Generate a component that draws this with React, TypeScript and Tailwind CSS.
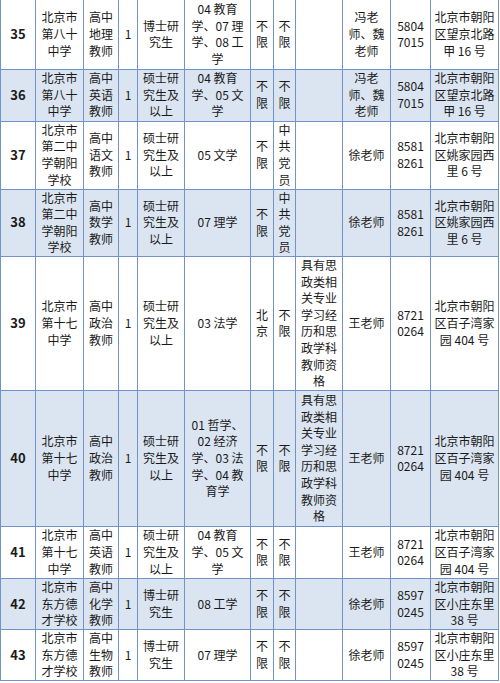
import React from "react";

type Row = {
  no: string;
  h: number;
  shade: boolean;
  cells: string[];
};

const rows: Row[] = [
  {
    no: "35",
    h: 69,
    shade: false,
    cells: [
      "北京市\n第八十\n中学",
      "高中\n地理\n教师",
      "1",
      "博士研\n究生",
      "04 教育\n学、07 理\n学、08 工\n学",
      "不\n限",
      "不\n限",
      "",
      "冯老\n师、魏\n老师",
      "5804\n7015",
      "北京市朝阳\n区望京北路\n甲 16 号",
    ],
  },
  {
    no: "36",
    h: 52,
    shade: true,
    cells: [
      "北京市\n第八十\n中学",
      "高中\n英语\n教师",
      "1",
      "硕士研\n究生及\n以上",
      "04 教育\n学、05 文\n学",
      "不\n限",
      "不\n限",
      "",
      "冯老\n师、魏\n老师",
      "5804\n7015",
      "北京市朝阳\n区望京北路\n甲 16 号",
    ],
  },
  {
    no: "37",
    h: 68,
    shade: false,
    cells: [
      "北京市\n第二中\n学朝阳\n学校",
      "高中\n语文\n教师",
      "1",
      "硕士研\n究生及\n以上",
      "05 文学",
      "不\n限",
      "中\n共\n党\n员",
      "",
      "徐老师",
      "8581\n8261",
      "北京市朝阳\n区姚家园西\n里 6 号",
    ],
  },
  {
    no: "38",
    h: 67,
    shade: true,
    cells: [
      "北京市\n第二中\n学朝阳\n学校",
      "高中\n数学\n教师",
      "1",
      "硕士研\n究生及\n以上",
      "07 理学",
      "不\n限",
      "中\n共\n党\n员",
      "",
      "徐老师",
      "8581\n8261",
      "北京市朝阳\n区姚家园西\n里 6 号",
    ],
  },
  {
    no: "39",
    h: 134,
    shade: false,
    cells: [
      "北京市\n第十七\n中学",
      "高中\n政治\n教师",
      "1",
      "硕士研\n究生及\n以上",
      "03 法学",
      "北\n京",
      "不\n限",
      "具有思\n政类相\n关专业\n学习经\n历和思\n政学科\n教师资\n格",
      "王老师",
      "8721\n0264",
      "北京市朝阳\n区百子湾家\n园 404 号",
    ],
  },
  {
    no: "40",
    h: 136,
    shade: true,
    cells: [
      "北京市\n第十七\n中学",
      "高中\n政治\n教师",
      "1",
      "硕士研\n究生及\n以上",
      "01 哲学、\n02 经济\n学、03 法\n学、04 教\n育学",
      "不\n限",
      "不\n限",
      "具有思\n政类相\n关专业\n学习经\n历和思\n政学科\n教师资\n格",
      "王老师",
      "8721\n0264",
      "北京市朝阳\n区百子湾家\n园 404 号",
    ],
  },
  {
    no: "41",
    h: 52,
    shade: false,
    cells: [
      "北京市\n第十七\n中学",
      "高中\n英语\n教师",
      "1",
      "硕士研\n究生及\n以上",
      "04 教育\n学、05 文\n学",
      "不\n限",
      "不\n限",
      "",
      "王老师",
      "8721\n0264",
      "北京市朝阳\n区百子湾家\n园 404 号",
    ],
  },
  {
    no: "42",
    h: 51,
    shade: true,
    cells: [
      "北京市\n东方德\n才学校",
      "高中\n化学\n教师",
      "1",
      "博士研\n究生",
      "08 工学",
      "不\n限",
      "不\n限",
      "",
      "徐老师",
      "8597\n0245",
      "北京市朝阳\n区小庄东里\n38 号",
    ],
  },
  {
    no: "43",
    h: 51,
    shade: false,
    cells: [
      "北京市\n东方德\n才学校",
      "高中\n生物\n教师",
      "1",
      "博士研\n究生",
      "07 理学",
      "不\n限",
      "不\n限",
      "",
      "徐老师",
      "8597\n0245",
      "北京市朝阳\n区小庄东里\n38 号",
    ],
  },
];

const widths = [35, 48, 35, 19, 47, 66, 23, 22, 47, 48, 40, 68];

function Lines({ text }: { text: string }) {
  const parts = text.split("\n");
  return (
    <>
      {parts.map((p, i) => (
        <div key={i} className="whitespace-nowrap">
          {p}
        </div>
      ))}
    </>
  );
}

export default function App() {
  return (
    <div className="w-[500px] h-[683px] bg-white overflow-hidden">
      <table
        className="table-fixed border-collapse w-[499px] text-[12px] leading-[16.6px] text-[#1a1a1a]"
        style={{ fontFamily: '"Noto Sans CJK SC", "Noto Sans", sans-serif' }}
      >
        <colgroup>
          {widths.map((w, i) => (
            <col key={i} style={{ width: w }} />
          ))}
        </colgroup>
        <tbody>
          {rows.map((r, ri) => (
            <tr
              key={r.no}
              className={r.shade ? "bg-[#dbe5f1]" : "bg-white"}
              style={{ height: r.h }}
            >
              <td
                className={`border border-[#7193c8] p-0 text-center align-middle font-bold text-[13px] ${
                  ri === 0 ? "border-t-0" : ""
                }`}
              >
                {r.no}
              </td>
              {r.cells.map((c, ci) => (
                <td
                  key={ci}
                  className={`border border-[#7193c8] p-0 text-center align-middle ${
                    ri === 0 ? "border-t-0" : ""
                  }`}
                >
                  <Lines text={c} />
                </td>
              ))}
            </tr>
          ))}
        </tbody>
      </table>
    </div>
  );
}
